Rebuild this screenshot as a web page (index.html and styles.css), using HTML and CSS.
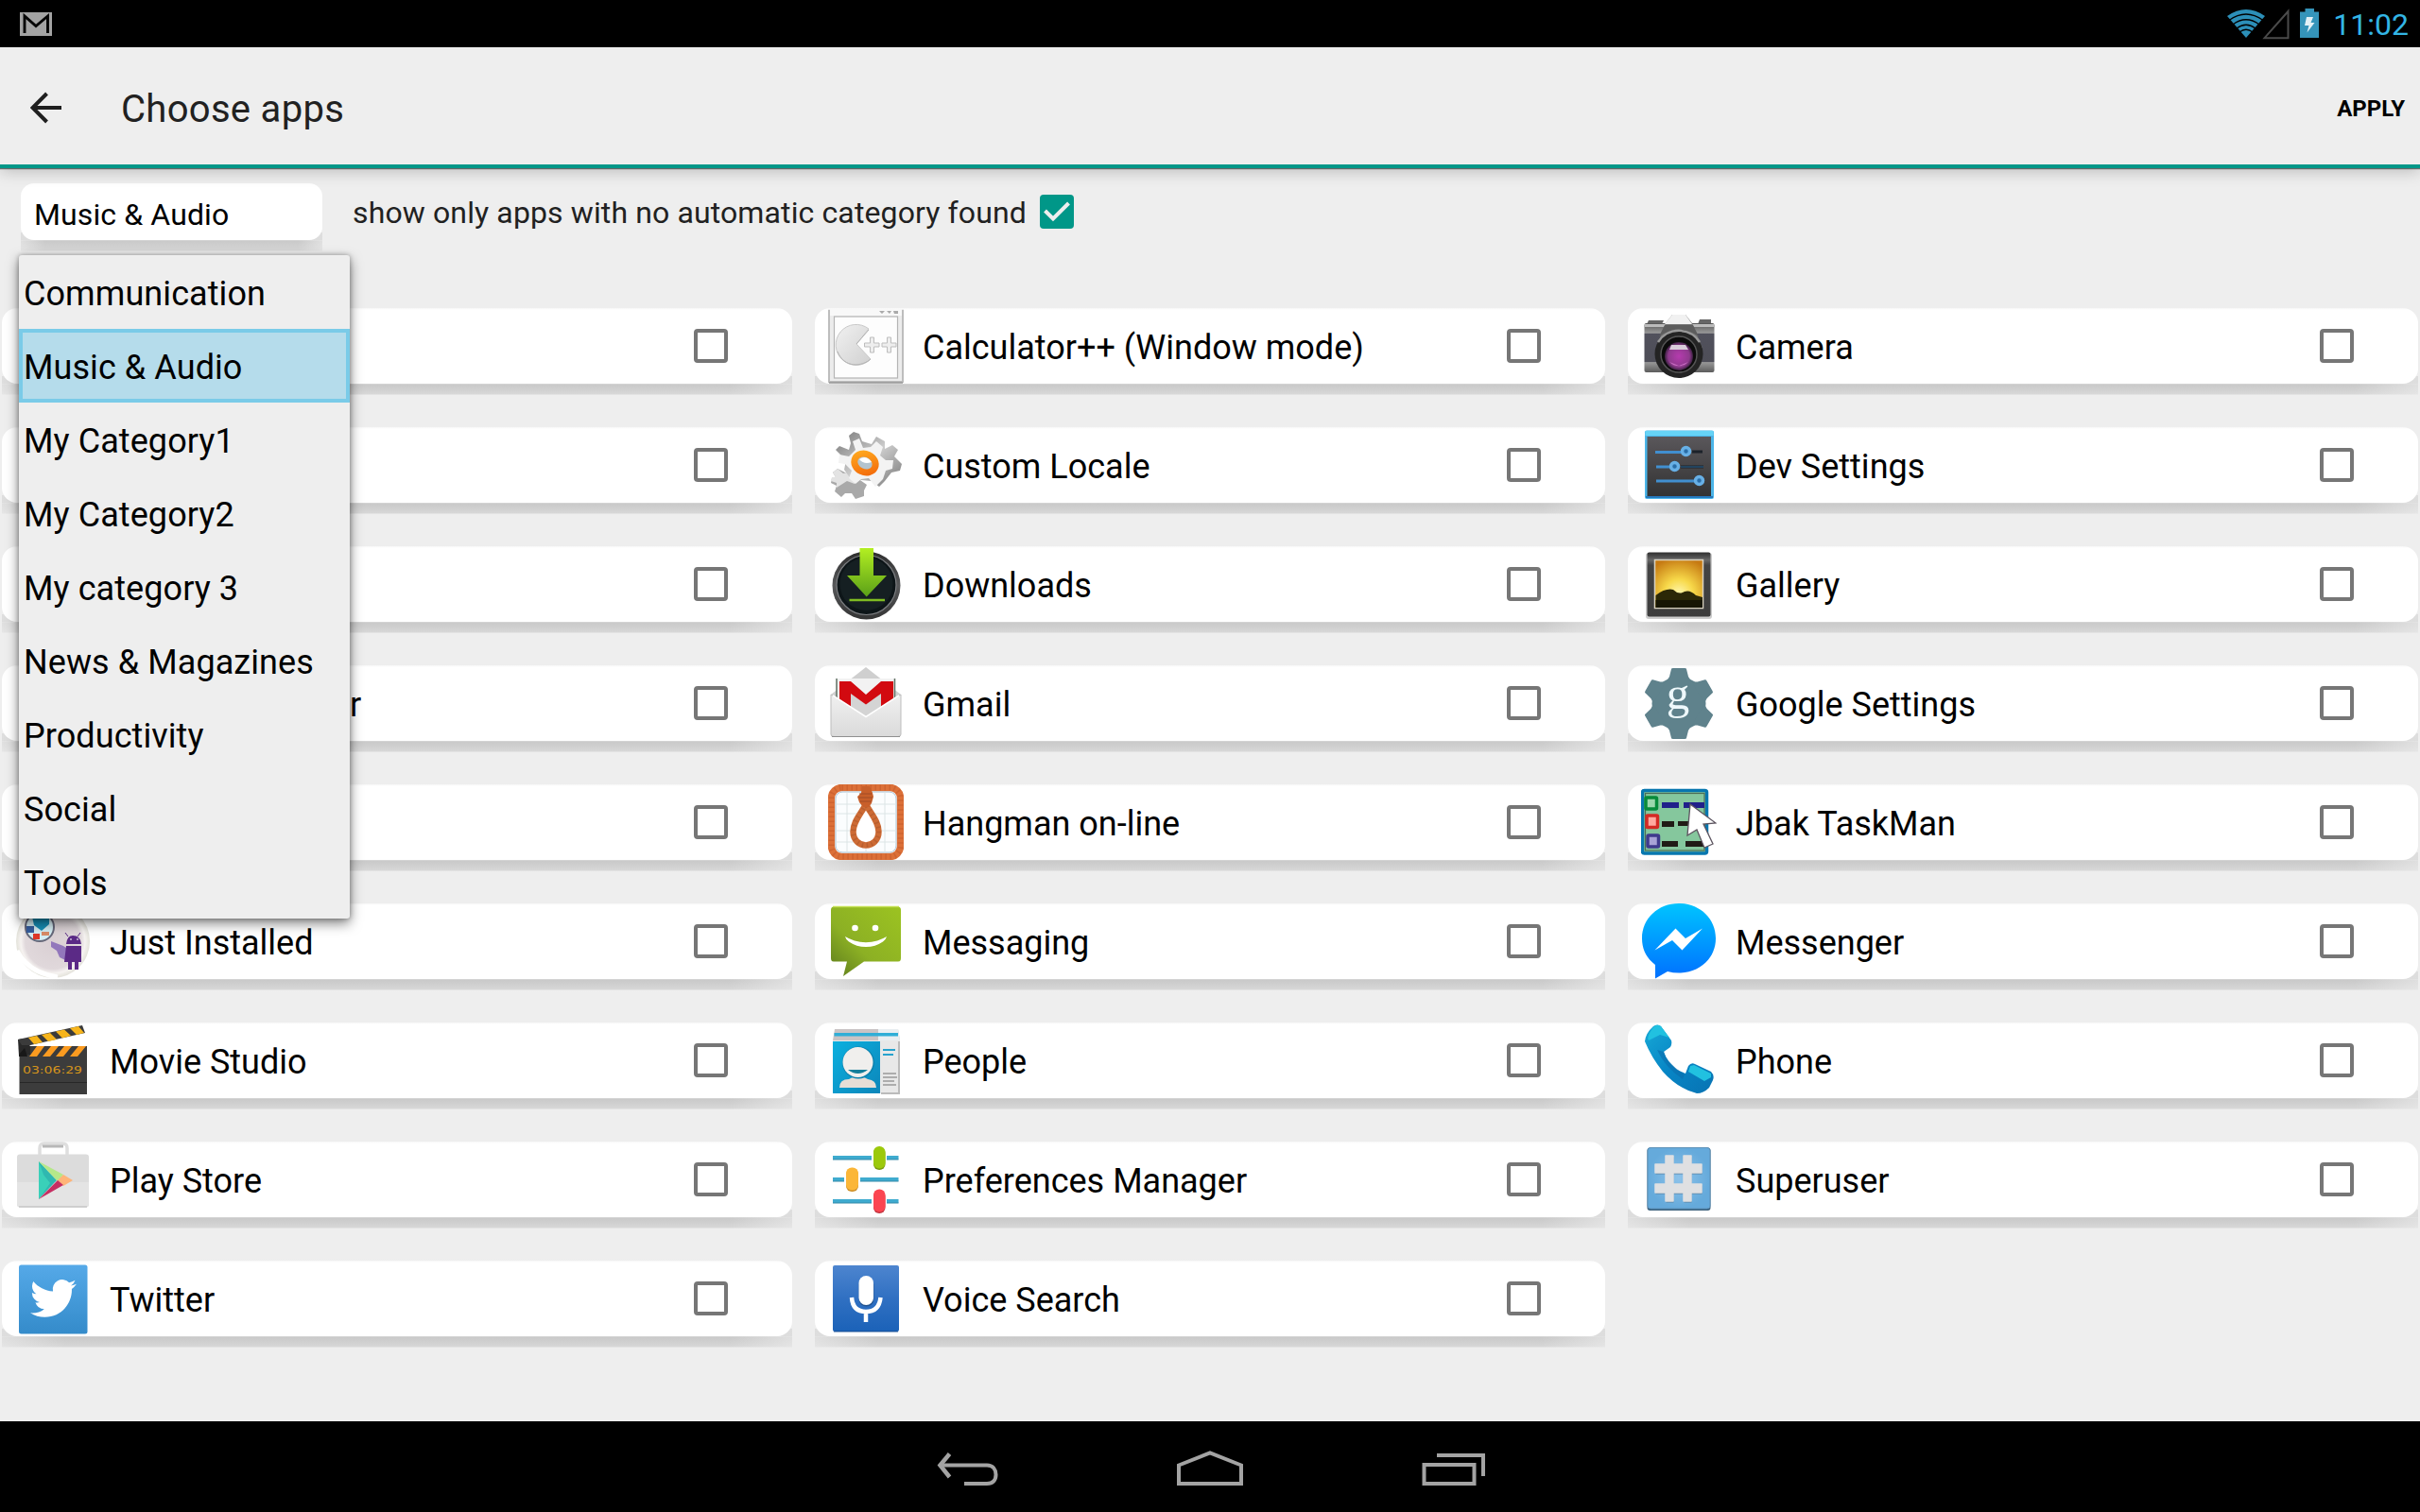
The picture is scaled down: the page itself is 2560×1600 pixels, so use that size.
FILE: index.html
```html
<!DOCTYPE html>
<html lang="en">
<head>
<meta charset="utf-8">
<title>Choose apps</title>
<link rel="stylesheet" href="styles.css">
</head>
<body>
<header class="status">
  <svg class="status-mail" width="34" height="25" viewBox="0 0 34 25"><rect width="34" height="25" fill="#a3a3a3"/><path d="M5 22V4L17 14.500 29.500 4V22" fill="none" stroke="#050505" stroke-width="2.900"/></svg>
  <div class="status-right">
    <svg width="68" height="34" viewBox="0 0 68 34">
      <path d="M0 8Q20 -6 40 8L20 31Z" fill="#2c8fb8"/>
      <g fill="none" stroke="#000" stroke-width="1.300"><path d="M2 12.500Q20 -.5 38 12.500"/><path d="M6 17Q20 6.500 34 17"/><path d="M10 21Q20 13.500 30 21"/><path d="M13 25Q20 19.500 27 25"/></g>
      <path d="M39.500 31.200H64.500V3Z" fill="none" stroke="#4b4b4b" stroke-width="2"/>
    </svg>
    <svg class="battery" width="20" height="32" viewBox="0 0 20 32"><path d="M5.500 0H15V3.500H20V31H0V3.500H5.500Z" fill="#3594ba"/><path d="M7 9H14L11.500 15H15.500L7.500 25.500 9.500 18H5Z" fill="#e3f1f7"/></svg>
    <span class="clock">11:02</span>
  </div>
</header>
<div class="appbar">
  <svg class="back" width="34" height="34" viewBox="0 0 34 34"><path d="M33 17H3M17.500 2 2.500 17 17.500 32" fill="none" stroke="#1f1f1f" stroke-width="4"/></svg>
  <h1 class="title">Choose apps</h1>
  <button class="apply">APPLY</button>
</div>
<main class="content">
  <div class="filter">
    <div class="spinner"><div class="spinner-face">Music &amp; Audio</div></div>
    <label class="only">show only apps with no automatic category found</label>
    <svg class="checked" width="36" height="36" viewBox="0 0 36 36"><rect width="36" height="36" rx="4" fill="#009788"/><path d="M5.500 17 14 25.500 30.500 9" fill="none" stroke="#eee" stroke-width="4"/></svg>
  </div>
  <ul class="menu">
    <li>Communication</li><li class="selected">Music &amp; Audio</li><li>My Category1</li><li>My Category2</li><li>My category 3</li><li>News &amp; Magazines</li><li>Productivity</li><li>Social</li><li>Tools</li>
  </ul>
  <div class="grid">
    <div class="card"><div class="face"><div class="icon"></div><span class="name"></span><i class="box"></i></div></div>
    <div class="card"><div class="face">
      <svg class="icon" viewBox="0 0 80 80"><defs><linearGradient id="pac" x1="0" y1="0" x2="1" y2="1"><stop stop-color="#f1f1f1"/><stop offset="1" stop-color="#d0d0d0"/></linearGradient></defs>
        <path d="M0 1H80V79H0Z" fill="#ececec"/><path d="M1 2V78H79V2" fill="none" stroke="#bdbdbd" stroke-width="2"/><path d="M2 1H78V8H2Z" fill="#f8f8f8"/><rect x="6.500" y="9" width="67" height="65" fill="#fdfdfd" stroke="#b5b5b5" stroke-width="1.200"/><path d="M1 79H79" stroke="#959595" stroke-width="1.500"/>
        <path d="M54 3H60L57 6ZM62 3H67L65 6ZM69 3H74V6H70Z" fill="#aaa"/>
        <path d="M43 22A21.500 21.500 0 1 0 45 54L30 38Z" fill="url(#pac)" stroke="#c9c9c9"/><path d="M10 46C17 64 36 62 45 54M43 23 30 38" fill="none" stroke="#b3b3b3"/>
        <path d="M44.500 31H48.500V37H54V41H48.500V47H44.500V41H38.500V37H44.500ZM62.500 31H66.500V37H72V41H66.500V47H62.500V41H57V37H62.500Z" fill="#eee" stroke="#bdbdbd"/></svg>
      <span class="name">Calculator++ (Window mode)</span><i class="box"></i></div></div>
    <div class="card"><div class="face">
      <svg class="icon" viewBox="0 0 80 80"><defs><linearGradient id="cam" x1="0" y1="0" x2="0" y2="1"><stop stop-color="#555"/><stop offset=".2" stop-color="#999"/><stop offset=".21" stop-color="#51515c"/><stop offset=".78" stop-color="#4e4e58"/><stop offset=".8" stop-color="#979797"/><stop offset="1" stop-color="#5c5c5c"/></linearGradient><radialGradient id="lens"><stop stop-color="#b53bae"/><stop offset=".75" stop-color="#8e3a8d"/><stop offset="1" stop-color="#3b2040"/></radialGradient></defs>
        <path d="M8 13H24L22 17H6ZM62 12H74V17H60Z" fill="#666"/><rect x="3.500" y="16" width="74" height="52" rx="2" fill="url(#cam)"/><path d="M4 17H77V20H4Z" fill="#bbb"/>
        <path d="M16 42 26 16 33 7H47L54 16 65 42Z" fill="#777"/><path d="M25 17 33 7H47L54 17Z" fill="#f1f1f1"/><path d="M25 18H55L61 30Q40 16 19 30Z" fill="#5d5d5d"/>
        <circle cx="40" cy="48.500" r="25.500" fill="#242424"/><path d="M18 36A26 26 0 0 1 62 36" stroke="#999" stroke-width="2.500" fill="none"/><circle cx="40" cy="49" r="19" fill="#0b0b0b" stroke="#555" stroke-width="1.500"/><circle cx="40" cy="51" r="15" fill="url(#lens)"/><path d="M32 39H47L50 44H30Z" fill="#d8ccd9"/><path d="M30 57A14 14 0 0 0 50 57L40 61Z" fill="#c86cc1"/></svg>
      <span class="name">Camera</span><i class="box"></i></div></div>

    <div class="card"><div class="face"><div class="icon"></div><span class="name"></span><i class="box"></i></div></div>
    <div class="card"><div class="face">
      <svg class="icon" viewBox="0 0 80 80"><defs><linearGradient id="gearg" x1="0" y1="0" x2="1" y2="1"><stop stop-color="#777"/><stop offset=".5" stop-color="#ccc"/><stop offset="1" stop-color="#777"/></linearGradient><linearGradient id="org" x1="0" y1="0" x2="1" y2="1"><stop stop-color="#ffa91f"/><stop offset="1" stop-color="#f36a0a"/></linearGradient></defs>
        <path d="M5 48 10 44 18 48 31 54 41 61 38 67 38 73 29 76 25 70 18 70 14 74 7 68 9 62 3 59 4 54 8 53Z" fill="#a9a9a9"/><path d="M5 48 10 44 16 49 25 47 30 55 28 60 20 57 9 64 9 59 3 57 4 53 8 53Z" fill="#e3e3e3"/>
        <path d="M22 9 27 5 33 7 36 15 46 18 51 10 60 15 60 23 68 19 74 24 70 31 78 39 76 46 67 48 60 57 54 63 46 57 24 55 17 45 19 35 8 24 12 20 22 24 24 17Z" fill="url(#gearg)"/>
        <path d="M26 15 33 12 37 22 45 21 51 15 58 21 55 30 61 35 69 35 68 44 61 46 58 55 50 63 43 54 35 55 29 60 22 54 25 46 18 39 11 38 12 29 22 31 29 24Z" fill="#f3f3f3"/>
        <ellipse cx="39" cy="38" rx="11.500" ry="9.500" transform="rotate(25 39 38)" fill="#b3c4cf" stroke="url(#org)" stroke-width="7"/><path d="M33 34Q40 29 46 37Q38 40 33 34" fill="#fff"/></svg>
      <span class="name">Custom Locale</span><i class="box"></i></div></div>
    <div class="card"><div class="face">
      <svg class="icon" viewBox="0 0 80 80"><defs><linearGradient id="devg" x1="0" y1="0" x2="0" y2="1"><stop stop-color="#5a575b"/><stop offset="1" stop-color="#333"/></linearGradient></defs>
        <rect x="4" y="3.500" width="73" height="72.500" rx="2" fill="#4bb5e8"/><rect x="4.500" y="4" width="72" height="5" fill="#66d3f6"/><rect x="6.500" y="10" width="67.500" height="63" fill="url(#devg)"/><path d="M5 74H76" stroke="#2578bd" stroke-width="2"/>
        <g stroke-width="3"><path d="M54 26H65M42 42H66" stroke="#1c222a"/><path d="M15 26.500H42M16 42H30M16 57H57" stroke="#418fd0"/></g><path d="M42 42H66" stroke="#286695"/>
        <g fill="#2a6ea8" stroke="#67b0e6" stroke-width="3.500"><circle cx="47.500" cy="25.500" r="4"/><circle cx="35.500" cy="41.500" r="4"/><circle cx="61.500" cy="56.500" r="4"/></g></svg>
      <span class="name">Dev Settings</span><i class="box"></i></div></div>

    <div class="card"><div class="face"><div class="icon"></div><span class="name"></span><i class="box"></i></div></div>
    <div class="card"><div class="face">
      <svg class="icon" viewBox="0 0 80 80"><defs><linearGradient id="arr" x1="0" y1="0" x2="0" y2="1"><stop stop-color="#b3ef22"/><stop offset="1" stop-color="#5a9f18"/></linearGradient><linearGradient id="disc" x1="0" y1="0" x2="0" y2="1"><stop stop-color="#2d2d2d"/><stop offset=".5" stop-color="#58595b"/><stop offset="1" stop-color="#343434"/></linearGradient></defs>
        <circle cx="40.500" cy="41.500" r="36" fill="url(#disc)"/><circle cx="40.500" cy="41" r="31.500" fill="#0d1518" stroke="#7b7d80" stroke-width="1.200"/><circle cx="40.500" cy="40" r="28" fill="#151f22"/>
        <path d="M33.500 2H48V31H62L40.700 53.500 20 31H33.500Z" fill="url(#arr)"/><path d="M22.500 57H60" stroke="#7fbc22" stroke-width="2.400"/></svg>
      <span class="name">Downloads</span><i class="box"></i></div></div>
    <div class="card"><div class="face">
      <svg class="icon" viewBox="0 0 80 80"><defs><radialGradient id="sun" cx=".5" cy=".7" r=".75"><stop stop-color="#fff8b0"/><stop offset=".4" stop-color="#f7d849"/><stop offset="1" stop-color="#c67a12"/></radialGradient><linearGradient id="frm" x1="0" y1="0" x2="0" y2="1"><stop stop-color="#2f2f2f"/><stop offset=".12" stop-color="#686868"/><stop offset=".2" stop-color="#444"/><stop offset="1" stop-color="#3d3d3d"/></linearGradient></defs>
        <rect x="5" y="7" width="70" height="70" rx="3" fill="#ccc"/><rect x="6.500" y="6.500" width="67" height="68" rx="2" fill="url(#frm)"/><rect x="14.500" y="14.500" width="51" height="51" fill="url(#sun)" stroke="#d9d3c2" stroke-width="1.500"/><path d="M15.500 52Q26 44 34 46Q40 52 46 48Q52 46 58 52L65 54V65H15.500Z" fill="#2c2807"/><path d="M15.500 57H65V65H15.500Z" fill="#171605"/></svg>
      <span class="name">Gallery</span><i class="box"></i></div></div>

    <div class="card"><div class="face"><div class="icon"></div><span class="name name-tail">r</span><i class="box"></i></div></div>
    <div class="card"><div class="face">
      <svg class="icon" viewBox="0 0 80 80"><defs><linearGradient id="env" x1="0" y1="0" x2="0" y2="1"><stop stop-color="#f0f0f0"/><stop offset="1" stop-color="#dadada"/></linearGradient></defs>
        <path d="M3 31 40 2 77 31V45H3Z" fill="#cfcfcf"/><path d="M9 14H71V50H9Z" fill="#f2f2f2"/><path d="M9 14V40M70.500 14V40" stroke="#607063" stroke-width="1.500"/>
        <path d="M24 28 40 41 56 28V48L40 55 24 48Z" fill="#d4d4d4"/><path d="M12 17H24L40 31 56 17H69V38L56 45V30L40 41.500 24 30V45L12 38Z" fill="#d20a10"/>
        <path d="M3 31 40 54.500 77 31V73Q77 75.500 74 75.500H6Q3 75.500 3 73Z" fill="url(#env)" stroke="#bdbdbd"/><path d="M4 75.500H76" stroke="#8f8f8f" stroke-width="1.200"/><path d="M5 32 40 54.500 75 32" fill="none" stroke="#fff" stroke-width="1.500"/></svg>
      <span class="name">Gmail</span><i class="box"></i></div></div>
    <div class="card"><div class="face">
      <svg class="icon" viewBox="0 0 80 80">
        <g fill="#5f828c"><circle cx="40" cy="40.500" r="28.500"/><g id="tooth"><path d="M27 17 30 12 32 4Q32 3 34 3H46Q48 3 48 4L50 12 53 17Z"/><path d="M27 64 30 69 32 77Q32 78 34 78H46Q48 78 48 77L50 69 53 64Z"/></g><use href="#tooth" transform="rotate(60 40 40.500)"/><use href="#tooth" transform="rotate(120 40 40.500)"/></g>
        <text x="39" y="45.500" font-size="49" text-anchor="middle" class="serif">g</text></svg>
      <span class="name">Google Settings</span><i class="box"></i></div></div>

    <div class="card"><div class="face"><div class="icon"></div><span class="name"></span><i class="box"></i></div></div>
    <div class="card"><div class="face">
      <svg class="icon" viewBox="0 0 80 80"><rect x="3.500" y="3.500" width="73" height="73" rx="11" fill="#fff" stroke="#dc7038" stroke-width="7.500"/><rect x="3.500" y="3.500" width="73" height="73" rx="11" fill="none" stroke="#b94f25" stroke-width="6" stroke-dasharray="1.500 3.500" opacity=".4"/>
        <rect x="8" y="8" width="64" height="64" rx="7" fill="#fbfdfe" stroke="#a8c4d8"/><path d="M20 8V72M40 8V72M60 8V72M8 21H72M8 31H72M8 49H72M8 61H72" stroke="#dce5e6"/>
        <path d="M40 21C35 31 26.500 39 26.500 50C26.500 59 33 64.500 40 64.500S53.500 59 53.500 50C53.500 39 45 31 40 21Z" fill="#fff" stroke="#cd6b35" stroke-width="6.500"/><path d="M40 21C35 31 26.500 39 26.500 50C26.500 59 33 64.500 40 64.500S53.500 59 53.500 50C53.500 39 45 31 40 21Z" fill="none" stroke="#9d4d29" stroke-width="5" stroke-dasharray="1.500 3.500" opacity=".4"/>
        <path d="M36 2H44L47 9 48 13 46 20 43 24H37L33 19 31 13 35 9Z" fill="#c85f2a"/><path d="M33 10H46M32 14H47M34 18H46" stroke="#a04d27" stroke-width="1.200"/></svg>
      <span class="name">Hangman on-line</span><i class="box"></i></div></div>
    <div class="card"><div class="face">
      <svg class="icon" viewBox="0 0 80 80"><rect x="1.500" y="6.500" width="68" height="66.500" rx="2" fill="#85c79d" stroke="#0877af" stroke-width="3.500"/><rect x="4.500" y="9.500" width="62.500" height="60.500" fill="none" stroke="#4c6d55" stroke-width="1.200"/>
        <g stroke-width="3.500"><rect x="5" y="14" width="11.500" height="12" rx="1" fill="#9bd8ad" stroke="#078b3a"/><rect x="6" y="33" width="11.500" height="12.500" rx="1" fill="#ffaaa0" stroke="#d42a24"/><rect x="7" y="54" width="11.500" height="12" rx="1" fill="#a9a3d6" stroke="#3f3a8c"/></g>
        <path d="M22 19H40V25H22ZM45 19H67V25H45Z" fill="#20208a"/><path d="M22 39H35V45H22ZM39 39H52V44H39ZM22 60H39V66H22ZM47 60H67V66H47Z" fill="#201b16"/>
        <path d="M52 21 79 41 66 42 76 63 67 67 59 48 49 54Z" fill="#fff" stroke="#5d5560" stroke-width="1.300"/></svg>
      <span class="name">Jbak TaskMan</span><i class="box"></i></div></div>

    <div class="card"><div class="face">
      <svg class="icon" viewBox="0 0 80 80"><defs><radialGradient id="orb"><stop stop-color="#d9cfd3"/><stop offset=".75" stop-color="#e0d8db"/><stop offset=".87" stop-color="#f6f3f1"/><stop offset="1" stop-color="#e3e2da"/></radialGradient></defs>
        <circle cx="40" cy="40" r="39" fill="url(#orb)"/><path d="M2 50C10 66 25 75 45 78" fill="none" stroke="#fff" stroke-width="5"/>
        <circle cx="26" cy="25" r="15" fill="#d5edf3" stroke="#66687a" stroke-width="2"/><path d="M18 14H36V22L28 29 20 23Z" fill="#168fb6"/><path d="M12 24H20V31H12Z" fill="#365e9f"/><path d="M19 32H26V38H19Z" fill="#df3728"/><path d="M28 30H36V34H28Z" fill="#d98c67"/>
        <path d="M38 40 51 45 57 49V62L47 57 44 50 38 46Z" fill="#9277bb"/><path d="M54 43Q55 34 61 34Q69 34 70 43ZM54 45H70V62H67V70H63V62H60V70H56V62H52Z" fill="#5b2a86"/><path d="M56 35 53 31M66 35 69 31" stroke="#5b2a86"/><path d="M58 38H60M65 38H67" stroke="#fff"/></svg>
      <span class="name">Just Installed</span><i class="box"></i></div></div>
    <div class="card"><div class="face">
      <svg class="icon" viewBox="0 0 80 80"><defs><linearGradient id="msg" x1="1" y1="0" x2="0" y2="1"><stop stop-color="#9cc321"/><stop offset=".6" stop-color="#8cb024"/><stop offset="1" stop-color="#5d7b1d"/></linearGradient></defs>
        <path d="M6 3.500H74Q77 3.500 77 7V58Q77 61.500 74 61.500H38L16 77 20 61.500H6Q3 61.500 3 58V7Q3 3.500 6 3.500Z" fill="url(#msg)"/><path d="M5 3.500H75" stroke="#c4e052" stroke-width="1.500"/><circle cx="28.500" cy="26" r="3.300" fill="#fff"/><circle cx="50" cy="26" r="3.300" fill="#fff"/><path d="M18 35Q22 37.500 28 39.500Q40 43 52 39.500Q58 37.500 62 35Q61 38.500 58 40.500Q50 46 40 46T22 40.500Q18.500 38 18 35Z" fill="#fff"/></svg>
      <span class="name">Messaging</span><i class="box"></i></div></div>
    <div class="card"><div class="face">
      <svg class="icon" viewBox="0 0 80 80"><defs><linearGradient id="mes" x1="0" y1="0" x2="0" y2="1"><stop stop-color="#00c4ff"/><stop offset="1" stop-color="#0070ff"/></linearGradient></defs>
        <path d="M40 0C62 0 79 16 79 37S62 73.500 40 73.500Q34 73.500 28 72L15 79.500V65C6 58 1 49 1 37C1 16 18 0 40 0Z" fill="url(#mes)"/><path d="M14.500 49.500 36.500 26.500 47 37 65 26.500 43.500 49.500 33 39Z" fill="#fff"/></svg>
      <span class="name">Messenger</span><i class="box"></i></div></div>

    <div class="card"><div class="face">
      <svg class="icon" viewBox="0 0 80 80"><rect x="4.500" y="25" width="71.500" height="51" fill="#3c3c3c"/><path d="M5 63.500H76" stroke="#272727"/><path d="M3 18 9 17 16 25 16 34 4 35Z" fill="#292929"/><path d="M3 18 71 3 74 11 16 24 7 24Z" fill="#3b3b3b"/>
        <path d="M14 16 23 14 29 21 20 23ZM28 13 37 11 44 18 35 20ZM43 9.500 52 7.500 59 14 50 16.500ZM58 6 67 4 73 11 65 13Z" fill="#f7b51b"/><path d="M23 25H31L23 36H15ZM38 25H46L37 36H29ZM52 25H60L51 36H43ZM67 25H75L66 36H58Z" fill="#fb9b20"/><path d="M4 34 10 27 13 36H4Z" fill="#181818"/>
        <text x="8" y="54" font-size="10" textLength="63" lengthAdjust="spacingAndGlyphs" class="lcd">03:06:29</text></svg>
      <span class="name">Movie Studio</span><i class="box"></i></div></div>
    <div class="card"><div class="face">
      <svg class="icon" viewBox="0 0 80 80"><defs><linearGradient id="ppl" x1="0" y1="0" x2="1" y2="1"><stop stop-color="#0bb0df"/><stop offset="1" stop-color="#0c86ba"/></linearGradient></defs>
        <path d="M7 7H74L76 19H5Z" fill="#c9c3c4"/><path d="M53 7H74L76 19H53Z" fill="#e8eef1"/><path d="M6.500 11H74V14.500H6.500Z" fill="#2faed7"/><path d="M5 19H76V75H5Z" fill="#e8e8e8"/><path d="M75 20V75H56" stroke="#bbb" stroke-width="2" fill="none"/><rect x="5" y="20" width="50" height="55" fill="url(#ppl)"/>
        <path d="M12 69Q12 60 22 60L26 58H38L42 60Q51 61 51 69Z" fill="#e7ded6"/><circle cx="32" cy="42.500" r="17" fill="#0b82ae"/><circle cx="31.500" cy="42" r="16" fill="#f0efed"/><path d="M21 50H42Q37 54 31.500 54T21 50Z" fill="#147e9a"/>
        <path d="M58 29H71M58 34H69" stroke="#27a2cd" stroke-width="2"/><path d="M58 54H72M58 58H73M58 62H70M58 66H72" stroke="#999" stroke-width="1.600"/></svg>
      <span class="name">People</span><i class="box"></i></div></div>
    <div class="card"><div class="face">
      <svg class="icon" viewBox="0 0 80 80"><defs><linearGradient id="pho" x1="0" y1="0" x2="1" y2="1"><stop stop-color="#18a9d6"/><stop offset=".5" stop-color="#0785c5"/><stop offset="1" stop-color="#0873b3"/></linearGradient></defs>
        <path d="M13 4Q17 1 21 4L32 19Q33 23 31 26L24 31Q27 41 38 50L47 54 50 46Q53 42 57 44L74 52Q78 56 76 61L72 69Q66 75 59 75Q39 70 23 52Q11 37 4 20Q5 11 13 4Z" fill="url(#pho)"/><path d="M13 5Q17 1 21 4L30 16 20 13 8 19Q6 17 9 11ZM52 46 56 45 74 54 74 58 67 62 50 52Z" fill="#21c1e0"/><path d="M24 31Q27 43 46 55L44 60Q25 47 17 29Z" fill="#0b6eae" opacity=".65"/></svg>
      <span class="name">Phone</span><i class="box"></i></div></div>

    <div class="card"><div class="face">
      <svg class="icon" viewBox="0 0 80 80"><path d="M26 14V7Q26 2 31 2H50Q55 2 55 7V14" fill="none" stroke="#dedede" stroke-width="3.500"/><path d="M29 5H51" stroke="#b8b8b8" stroke-width="3"/><rect x="2" y="13.500" width="76" height="56" rx="3" fill="#dcdcdc"/><path d="M2 43H78V66Q78 69 75 69H5Q2 69 2 66Z" fill="#e4e4e4"/><path d="M4 69H76" stroke="#c6c6c6" stroke-width="1.500"/>
        <path d="M25 21V61L44 41Z" fill="#2fb8b0"/><path d="M25 21 30 35 37 44 25 61Z" fill="#42dfc0" opacity=".6"/><path d="M25 21 51 35 45 42Z" fill="#b5e889"/><path d="M45 41 51 35 61 41 51 47Z" fill="#ffb478"/><path d="M25 61 45 41 51 46Z" fill="#c62f62"/></svg>
      <span class="name">Play Store</span><i class="box"></i></div></div>
    <div class="card"><div class="face">
      <svg class="icon" viewBox="0 0 80 80"><g stroke="#3fabcf" stroke-width="4"><path d="M5 17H46M62 17H74.500M5 40H17M34 40H74.500M5 63H46M62 63H74.500"/></g><path d="M5 19H46M62 19H74.500M5 42H17M34 42H74.500M5 65H46M62 65H74.500" stroke="#3389a8"/><rect x="48" y="6" width="12.500" height="24" rx="6" fill="#79990c"/><rect x="48" y="5" width="12.500" height="23.500" rx="6" fill="#9cc90b"/><rect x="19" y="29" width="13" height="24" rx="6" fill="#cc8f28"/><rect x="19" y="27.500" width="13" height="24" rx="6" fill="#fbb638"/><rect x="48" y="52" width="12.500" height="24" rx="6" fill="#c23640"/><rect x="48" y="50.500" width="12.500" height="24" rx="6" fill="#fb4551"/></svg>
      <span class="name">Preferences Manager</span><i class="box"></i></div></div>
    <div class="card"><div class="face">
      <svg class="icon" viewBox="0 0 80 80"><defs><radialGradient id="su"><stop stop-color="#8cc2ea"/><stop offset="1" stop-color="#65aadb"/></radialGradient></defs>
        <rect x="6.500" y="6.500" width="67" height="66.500" rx="3" fill="#3b607c"/><rect x="7" y="6.500" width="66" height="64.500" rx="3" fill="url(#su)" stroke="#5c91b8"/><path d="M26 15H34V24H45V15H53V24H64V33H53V45H64V54H53V63H45V54H34V63H26V54H15V45H26V33H15V24H26ZM34 33V45H45V33Z" fill="#5c84a3" fill-rule="evenodd" transform="translate(.5 1.500)"/><path d="M26 15H34V24H45V15H53V24H64V33H53V45H64V54H53V63H45V54H34V63H26V54H15V45H26V33H15V24H26ZM34 33V45H45V33Z" fill="#dfe0e2" fill-rule="evenodd" stroke="#dfe0e2" stroke-linejoin="round" stroke-width="1.500"/></svg>
      <span class="name">Superuser</span><i class="box"></i></div></div>

    <div class="card"><div class="face">
      <svg class="icon" viewBox="0 0 80 80"><defs><linearGradient id="tw" x1="0" y1="0" x2="0" y2="1"><stop stop-color="#55a9e8"/><stop offset="1" stop-color="#348bca"/></linearGradient></defs>
        <rect x="4" y="4.500" width="72.500" height="73" rx="2.500" fill="url(#tw)"/><path transform="translate(16 15.500) scale(2.040)" fill="#fff" d="M23.950 4.570a10 10 0 0 1-2.820.770 4.960 4.960 0 0 0 2.160-2.720c-.950.550-2 .960-3.130 1.180a4.920 4.920 0 0 0-8.380 4.480C7.690 8.090 4.070 6.130 1.640 3.160a4.820 4.820 0 0 0-.670 2.480c0 1.710.870 3.210 2.190 4.100a4.900 4.900 0 0 1-2.230-.620v.060a4.920 4.920 0 0 0 3.950 4.830 5 5 0 0 1-2.210.080 4.940 4.940 0 0 0 4.600 3.420A9.870 9.870 0 0 1 0 19.540a13.990 13.990 0 0 0 7.550 2.210c9.050 0 14-7.500 14-13.980 0-.210 0-.420-.020-.630a9.940 9.940 0 0 0 2.460-2.550z"/></svg>
      <span class="name">Twitter</span><i class="box"></i></div></div>
    <div class="card"><div class="face">
      <svg class="icon" viewBox="0 0 80 80"><defs><linearGradient id="vs" x1="0" y1="0" x2="0" y2="1"><stop stop-color="#4d85cf"/><stop offset=".5" stop-color="#3070c2"/><stop offset="1" stop-color="#1b62b8"/></linearGradient></defs>
        <rect x="5" y="5" width="70" height="70" rx="2" fill="url(#vs)"/><path d="M6 75H74" stroke="#164c91" stroke-width="1"/><g transform="translate(0 1.500)" opacity=".35"><rect x="32.500" y="16" width="16" height="31" rx="8" fill="#123"/></g><rect x="32.500" y="16" width="15.500" height="31" rx="7.750" fill="#fff"/><path d="M25 39Q26 54 40 54T55.500 39M40 54V65" fill="none" stroke="#fff" stroke-width="4.500"/></svg>
      <span class="name">Voice Search</span><i class="box"></i></div></div>
  </div>
</main>
<nav class="navbar">
  <svg width="66" height="38" viewBox="0 0 66 38"><path d="M5 16.500H54C60.500 16.500 63.500 21 63.500 26.500S60.500 36 54 36H30" fill="none" stroke="#a3a3a3" stroke-width="4"/><path d="M14 4H16.500V5.500L8.500 16.500 16.500 28V30.500H12L2 18V15L12 4Z" fill="none"/><path d="M14.500 4.500 4.500 16.500 14.500 29" fill="none" stroke="#a3a3a3" stroke-width="4.500"/></svg>
  <svg width="72" height="40" viewBox="0 0 72 40"><path d="M3 36V16.500L36 3.500 69 16.500V36Z" fill="none" stroke="#a3a3a3" stroke-width="4"/></svg>
  <svg width="68" height="38" viewBox="0 0 68 38"><path d="M2.500 16H55.500V36H2.500ZM16 6H65V28" fill="none" stroke="#a3a3a3" stroke-width="4"/></svg>
</nav>
</body>
</html>
```
FILE: styles.css
```css
* { box-sizing: border-box; }
body { margin: 0; width: 2560px; height: 1600px; overflow: hidden; display: flex; flex-direction: column; background: #eee; color: #000; font-family: Roboto, "Liberation Sans", sans-serif; }
svg { display: block; flex: none; }

.status { height: 50px; flex: none; background: #000; display: flex; justify-content: space-between; padding: 0 12px 0 21px; }
.status-mail { margin-top: 13px; }
.status-right { display: flex; align-items: flex-start; padding-top: 9px; }
.battery { margin-left: 9px; }
.clock { margin: -9px 0 0 15px; padding-top: 2px; height: 50px; line-height: 48px; font-size: 32px; color: #33b5e5; }

.appbar { height: 128px; flex: none; display: flex; align-items: center; border-bottom: 4px solid #009788; padding: 0 16px 0 32px; position: relative; z-index: 1; box-shadow: 0 1px 1px rgba(0,0,0,.5), 0 3px 16px rgba(0,0,0,.22); background: #eee; }
.back { margin-top: 4px; }
.title { margin: 0; padding: 8px 0 0 62px; font-size: 40px; font-weight: 400; line-height: 48px; letter-spacing: .3px; color: #212121; flex: 1; }
.apply { border: 0; background: none; padding: 6px 0 0; font: 700 24px/30px Roboto, sans-serif; color: #000; }

.content { flex: 1; position: relative; padding-top: 16px; }
.filter { display: flex; align-items: flex-start; padding-left: 22px; height: 132px; }
.spinner, .card { background: linear-gradient(90deg, rgba(238,238,238,.6), rgba(238,238,238,0) 8%, rgba(238,238,238,0) 92%, rgba(238,238,238,.6)) bottom/100% 12px no-repeat, linear-gradient(#dedede 0, #ddd 8px, #c9c9c9 9px, #d7d7d7 19px, #eee 20px) bottom/100% 20px no-repeat; }
.spinner { width: 319px; height: 72px; }
.spinner-face { height: 60px; border-radius: 14px; background: #fff; font-size: 32px; line-height: 54px; letter-spacing: .12px; padding: 6px 0 0 14px; }
.only { width: 713px; margin-left: 32px; padding-top: 2px; font-size: 32px; line-height: 58px; letter-spacing: .12px; color: #212121; white-space: nowrap; }
.checked { margin: 12px 0 0 14px; }

.menu { position: absolute; z-index: 2; left: 20px; top: 92px; width: 350px; height: 702px; margin: 0; padding: 0; list-style: none; background: #eee; border-radius: 3px; box-shadow: 0 5px 13px rgba(0,0,0,.5), 0 0 5px rgba(0,0,0,.3); }
.menu li { height: 78px; padding: 4px 0 0 5px; font-size: 36px; line-height: 74px; letter-spacing: .08px; white-space: nowrap; }
.menu .selected { background: #b5dceb; border: 4px solid #7acbe8; padding: 0 0 0 1px; }

.grid { display: grid; grid-template-columns: repeat(3, 836px); column-gap: 24px; row-gap: 34px; padding-left: 2px; }
.card { height: 92px; }
.face { height: 80px; display: flex; align-items: center; border-radius: 16px; background: linear-gradient(#f6f6f6, #fff 2px); padding: 0 68px 0 14px; }
.icon { width: 80px; height: 80px; flex: none; }
.name { flex: 1; padding: 4px 0 0 20px; font-size: 36px; line-height: 77px; white-space: nowrap; }
.name-tail { padding-left: 274px; }
.box { width: 36px; height: 36px; flex: none; border: 4px solid #767676; border-radius: 4px; }
.serif { font-family: "Liberation Serif", serif; fill: #eef8fb; }
.lcd { font-family: "DejaVu Sans", sans-serif; fill: #d5941c; }

.navbar { height: 96px; flex: none; background: #000; display: flex; justify-content: center; align-items: flex-start; padding: 30px 0 0 2px; gap: 188px; }
```
